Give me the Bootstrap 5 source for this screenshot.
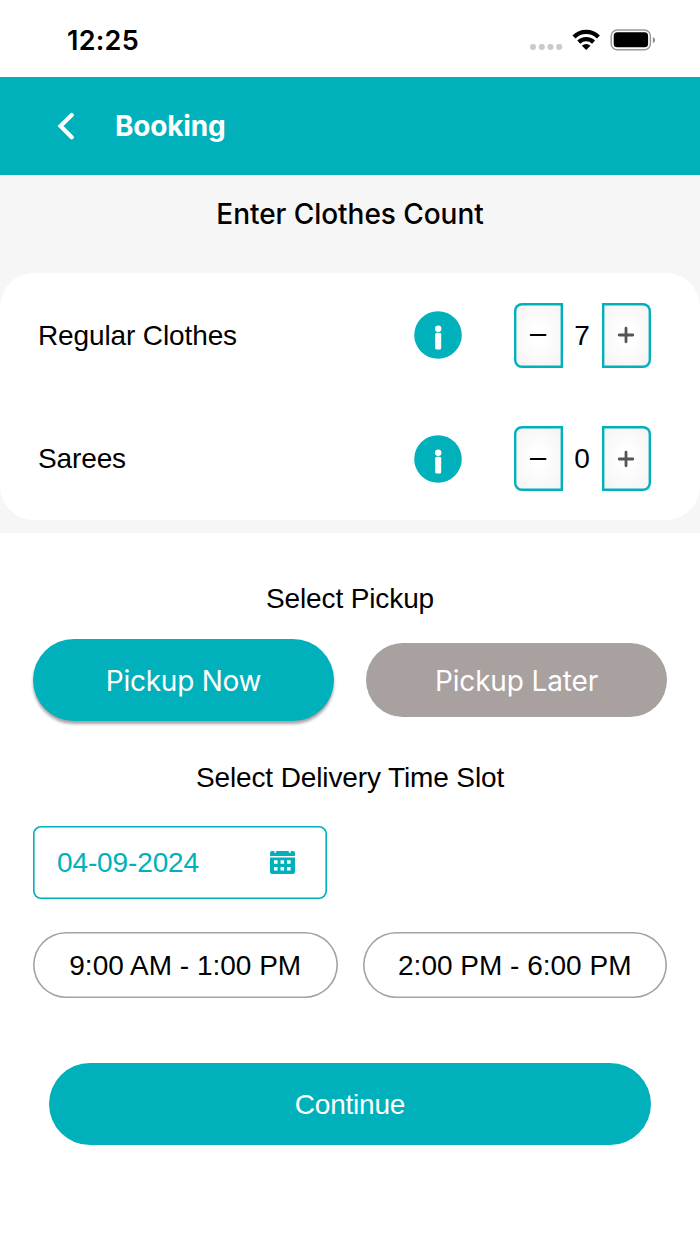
<!DOCTYPE html>
<html lang="en">
<head>
<meta charset="utf-8">
<meta name="viewport" content="width=device-width, initial-scale=1">
<title>Booking</title>
<link href="https://cdn.jsdelivr.net/npm/bootstrap@5.3.0/dist/css/bootstrap.min.css" rel="stylesheet">
<style>
:root { --teal: #00b1bc; --taupe: #a9a0a0; }
body { font-family: "Liberation Sans", Arial, sans-serif; font-size: 28px; line-height: 32px; letter-spacing: -.12px; color: #000; background: #fff; }
.ui-font { font-family: Inter, sans-serif; }
.status-bar { height: 77px; padding: 3px 44px 0 67px; }
.status-icons { margin-bottom: 2px; }
.clock { font-weight: 600; font-size: 27px; letter-spacing: .25px; padding-top: 2px; }
.app-bar { height: 98px; background: var(--teal); padding-left: 57px; }
.app-bar h1 { font-size: 28px; font-weight: 700; letter-spacing: -.2px; margin-left: 40px; padding-top: 2px; }
.count-area { background: #f6f6f6; padding-bottom: 13px; }
.count-title { height: 98px; padding-top: 23px; font-weight: 500; letter-spacing: -.05px; }
.count-card { border-radius: 34px; padding-top: .4px; }
.count-row { height: 123.5px; padding: 0 49.5px 0 38px; }
.count-row > span { padding-top: 1px; }
.info-btn { margin-right: 51.5px; }
.step-btn { width: 49px; height: 65px; padding: 0; border: 0; box-shadow: inset 0 0 0 2.4px var(--teal); background: radial-gradient(ellipse at center, #fff 15%, #f1f1f1 110%); }
.step-minus { border-radius: 8px 0 0 8px; }
.step-plus { border-radius: 0 8px 8px 0; }
.step-value { width: 39px; }
.section-title { font-size: 28px; line-height: 32px; font-weight: 400; }
.pickup-title { padding-top: 50px; }
.pickup-row { margin: 24px 33px 0; gap: 32px; height: 82px; }
.pill { border: 0; border-radius: 50rem; color: #fff; font-size: 28px; line-height: 32px; padding: 0; }
.pill:hover { color: #fff; }
.pickup-now { height: 82px; background: var(--teal); box-shadow: 0 3px 3px rgba(70,50,50,.45); letter-spacing: -.25px; padding-top: 1px; }
.pickup-later { height: 74px; background: var(--taupe); letter-spacing: -.15px; padding-top: 2px; }
.delivery-title { padding-top: 41px; }
.date-field { width: 294px; height: 73px; margin: 32px 0 0 33px; padding: 0 32px 0 24px; box-shadow: inset 0 0 0 1.6px var(--teal); border-radius: 8px; color: var(--teal); background: #fff; }
.date-field span { padding-top: 1px; }
.date-field svg { margin-bottom: 1px; }
.slot-row { margin: 33px 33px 0; gap: 25px; }
.slot { height: 66px; border: 0; box-shadow: inset 0 0 0 1.6px var(--taupe); border-radius: 50rem; background: #fff; font-size: 28px; line-height: 32px; padding: 1px 0 0; color: #000; }
.continue-btn { height: 82px; margin: 65px 49px 0; padding-top: 1px; background: var(--teal); letter-spacing: -.2px; }
svg { display: block; flex: none; }
</style>
</head>
<body>
<div class="status-bar ui-font d-flex align-items-center justify-content-between">
  <span class="clock">12:25</span>
  <svg class="status-icons" width="126" height="28" viewBox="0 0 126 28" aria-hidden="true">
    <g fill="#cbcbcb">
      <rect x="0" y="19" width="6" height="6" rx="2.4"/><rect x="8.8" y="19" width="6" height="6" rx="2.4"/><rect x="17.5" y="19" width="6" height="6" rx="2.4"/><rect x="26.2" y="19" width="6" height="6" rx="2.4"/>
    </g>
    <g fill="none" stroke="#000" stroke-width="4.300">
      <path d="M44 11.900a17.300 17.300 0 0 1 24.400 0"/><path d="M48.800 17.100a10.500 10.500 0 0 1 14.800 0"/>
    </g>
    <path d="M56.200 25l-4.300-4.200a6.200 6.200 0 0 1 8.600 0z"/>
    <rect x="81.200" y="4.900" width="39.200" height="19.800" rx="6" fill="#fff" stroke="#999" stroke-width="1.500"/>
    <rect x="83.700" y="7.300" width="34.400" height="15" rx="3.600"/>
    <path d="M122.900 12.300c2.800.7 2.800 5 0 5.700z" fill="#888"/>
  </svg>
</div>

<header class="app-bar ui-font d-flex align-items-center text-white">
  <svg width="18" height="28" viewBox="0 0 18 28" fill="none" stroke="#fff" stroke-width="4.200" stroke-linecap="round" stroke-linejoin="miter" aria-hidden="true"><path d="M14.700 3L3.500 14.100l11.200 11.200"/></svg>
  <h1 class="mb-0">Booking</h1>
</header>

<section class="count-area">
  <div class="count-title ui-font text-center">Enter Clothes Count</div>
  <div class="count-card bg-white">
    <div class="count-row d-flex align-items-center">
      <span class="me-auto">Regular Clothes</span>
      <svg class="info-btn" width="48" height="48" viewBox="0 0 48 48" aria-hidden="true"><circle cx="24" cy="24" r="23.800" fill="#00b1bc"/><circle cx="24.200" cy="17.800" r="3.200" fill="#fff"/><rect x="21.200" y="21.800" width="6" height="16.800" rx="1.500" fill="#fff"/></svg>
      <button class="step-btn step-minus d-flex align-items-center justify-content-center" type="button" aria-label="Less"><svg width="18" height="18" viewBox="0 0 18 18" stroke="#000" stroke-width="2.200" stroke-linecap="round"><path d="M1.800 9h14.600"/></svg></button>
      <span class="step-value text-center">7</span>
      <button class="step-btn step-plus d-flex align-items-center justify-content-center" type="button" aria-label="More"><svg width="18" height="18" viewBox="0 0 18 18" stroke="#555" stroke-width="2.800" stroke-linecap="round"><path d="M2.200 9h13.600M9 2.200v13.600"/></svg></button>
    </div>
    <div class="count-row d-flex align-items-center">
      <span class="me-auto">Sarees</span>
      <svg class="info-btn" width="48" height="48" viewBox="0 0 48 48" aria-hidden="true"><circle cx="24" cy="24" r="23.800" fill="#00b1bc"/><circle cx="24.200" cy="17.800" r="3.200" fill="#fff"/><rect x="21.200" y="21.800" width="6" height="16.800" rx="1.500" fill="#fff"/></svg>
      <button class="step-btn step-minus d-flex align-items-center justify-content-center" type="button" aria-label="Less"><svg width="18" height="18" viewBox="0 0 18 18" stroke="#000" stroke-width="2.200" stroke-linecap="round"><path d="M1.800 9h14.600"/></svg></button>
      <span class="step-value text-center">0</span>
      <button class="step-btn step-plus d-flex align-items-center justify-content-center" type="button" aria-label="More"><svg width="18" height="18" viewBox="0 0 18 18" stroke="#555" stroke-width="2.800" stroke-linecap="round"><path d="M2.200 9h13.600M9 2.200v13.600"/></svg></button>
    </div>
  </div>
</section>

<main>
  <h2 class="section-title pickup-title text-center mb-0">Select Pickup</h2>
  <div class="pickup-row ui-font d-flex align-items-center">
    <button class="btn pill pickup-now flex-fill w-50" type="button">Pickup Now</button>
    <button class="btn pill pickup-later flex-fill w-50" type="button">Pickup Later</button>
  </div>

  <h2 class="section-title delivery-title text-center mb-0">Select Delivery Time Slot</h2>
  <div class="date-field d-flex align-items-center justify-content-between">
    <span>04-09-2024</span>
    <svg width="25" height="24" viewBox="0 0 25 24" fill="#00b1bc" aria-hidden="true">
      <path fill-rule="evenodd" d="M2 1h2.200v1.800h2V1h12.600v1.800h2V1H23a2 2 0 0 1 2 2v3H0V3a2 2 0 0 1 2-2zM0 7.500h25V22a2 2 0 0 1-2 2H2a2 2 0 0 1-2-2zM4 10.200v3.600h3.600v-3.600zM10.500 10.200v3.600h3.600v-3.600zM17 10.200v3.600h3.600v-3.600zM4 16.900v3.600h3.600v-3.600zM10.500 16.900v3.600h3.600v-3.600zM17 16.900v3.600h3.600v-3.600z"/>
    </svg>
  </div>
  <div class="slot-row d-flex">
    <button class="btn slot w-50" type="button">9:00 AM - 1:00 PM</button>
    <button class="btn slot w-50" type="button">2:00 PM - 6:00 PM</button>
  </div>
  <div class="d-grid"><button class="btn pill continue-btn" type="button">Continue</button></div>
</main>
<script src="https://cdn.jsdelivr.net/npm/bootstrap@5.3.0/dist/js/bootstrap.bundle.min.js"></script>
</body>
</html>
